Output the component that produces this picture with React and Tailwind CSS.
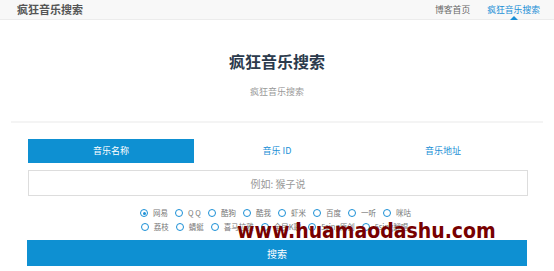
import React from 'react';

const sources1 = ['网易', 'QQ', '酷狗', '酷我', '虾米', '百度', '一听', '咪咕'];
const sources2 = ['荔枝', '蜻蜓', '喜马拉雅', '全民K歌', '5sing原创', '5sing翻唱'];

const Radio = ({ label, checked }) => (
  <label className="flex items-center gap-[5px] mr-[7px]">
    <span className="w-[8px] h-[8px] rounded-full border-[1.5px] border-[#1a8fd6] flex items-center justify-center">
      {checked && <span className="w-[3px] h-[3px] rounded-full bg-[#1a8fd6]" />}
    </span>
    <span className="text-[7.5px] text-[#777] leading-none">{label === 'QQ' ? 'Q Q' : label}</span>
  </label>
);

export default function App() {
  const [tab, setTab] = React.useState(0);
  const tabs = ['音乐名称', '音乐 ID', '音乐地址'];

  return (
    <div className="relative w-[554px] h-[271px] overflow-hidden bg-white" style={{ fontFamily: '"Noto Sans CJK SC", "Noto Sans", sans-serif' }}>
      {/* top bar */}
      <div className="h-[20px] bg-[#f8f8f8] border-b border-[#ececec] flex items-center justify-between pl-[17px] pr-[14px]">
        <span className="text-[11px] font-bold text-[#555]">疯狂音乐搜索</span>
        <div className="flex items-center gap-[17px] text-[8.8px]">
          <span className="text-[#666]">博客首页</span>
          <span className="relative text-[#1a8fd6]">
            疯狂音乐搜索
            <span className="absolute left-1/2 -translate-x-1/2 top-[13px] w-0 h-0 border-l-[4px] border-r-[4px] border-b-[4px] border-l-transparent border-r-transparent border-b-[#1a8fd6]" />
          </span>
        </div>
      </div>

      {/* hero */}
      <div className="flex flex-col items-center pt-[29px]">
        <h1 className="text-[16px] font-bold text-[#2b3a4c] leading-[24px]">疯狂音乐搜索</h1>
        <p className="mt-[13px] text-[9px] text-[#999] leading-[12px]">疯狂音乐搜索</p>
      </div>
      <div className="mx-[11px] mt-[23px] h-[2px] bg-[#f4f4f4]" />

      {/* form */}
      <div className="px-[28px] mt-[16px]">
        <div className="grid grid-cols-3 h-[24px] w-[498px]">
          {tabs.map((t, i) => (
            <button
              key={t}
              onClick={() => setTab(i)}
              className={`text-[9px] flex items-center justify-center ${tab === i ? 'bg-[#0e90d2] text-white' : 'text-[#1a8fd6]'}`}
            >
              {t}
            </button>
          ))}
        </div>
        <input
          className="mt-[7px] w-[500px] h-[26px] border border-[#ddd] text-center text-[10px] outline-none placeholder:text-[#999]"
          placeholder="例如: 猴子说"
        />
        <div className="mt-[13px] flex flex-col items-center gap-[6px]">
          <div className="flex pl-[4px]">
            {sources1.map((s, i) => <Radio key={s} label={s} checked={i === 0} />)}
          </div>
          <div className="flex pl-[2px]">
            {sources2.map(s => <Radio key={s} label={s} />)}
          </div>
        </div>
        <button className="mt-[9px] -ml-[1px] w-[500px] h-[26px] bg-[#0e90d2] text-white text-[10px]">搜索</button>
      </div>

      {/* watermark */}
      <div className="absolute left-[237px] top-[221px] text-[21px] font-bold font-stretch-condensed text-[#770000] leading-none" style={{ fontFamily: '"DejaVu Sans Condensed", "DejaVu Sans", sans-serif' }}>
        www.huamaodashu.com
      </div>
    </div>
  );
}
